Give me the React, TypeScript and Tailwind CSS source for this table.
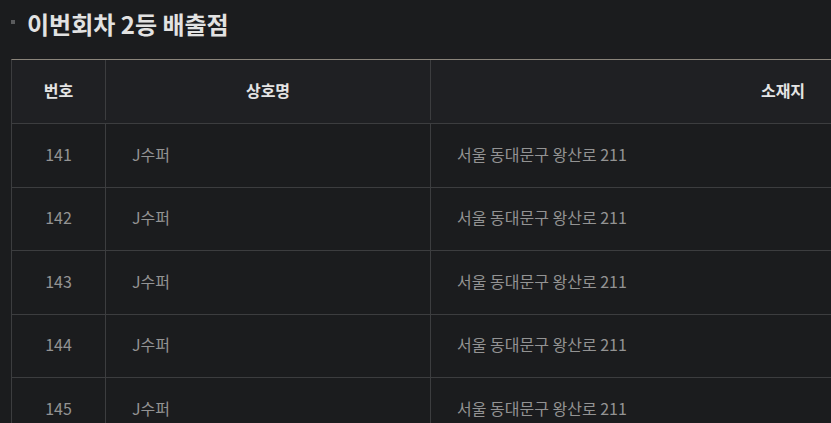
const rows = [141, 142, 143, 144, 145];

export default function App() {
  return (
    <div
      className="w-[831px] h-[423px] overflow-hidden bg-[#1b1c1e]"
      style={{ fontFamily: '"Noto Sans CJK KR", "Noto Sans", sans-serif' }}
    >
      <div className="flex items-start gap-3 pl-[11px] pt-[7px] h-[59px]">
        <span className="mt-[13px] w-1 h-1 bg-[#5a5b5d]" />
        <h2 className="text-[24px] leading-[34px] font-bold text-[#e2e2e2]">이번회차 2등 배출점</h2>
      </div>
      <div className="ml-[11px] w-[1124px] border-t border-[#8a847a] border-l border-l-[#3c3d3f]">
        <div className="flex h-[64px] bg-[#1f2023] border-b border-[#3c3d3f] text-[16px] font-bold text-[#e4e4e4] pb-[3px]">
          <div className="w-[94px] flex items-center justify-center border-r border-[#3c3d3f]">번호</div>
          <div className="w-[325px] flex items-center justify-center border-r border-[#3c3d3f]">상호명</div>
          <div className="flex-1 flex items-center justify-center">소재지</div>
        </div>
        {rows.map((n) => (
          <div key={n} className="flex h-[63.5px] border-b border-[#3c3d3f] text-[16px] text-[#939393]">
            <div className="w-[94px] flex items-center justify-center border-r border-[#3c3d3f] pb-[3px]">{n}</div>
            <div className="w-[325px] flex items-center pl-[26px] border-r border-[#3c3d3f] pb-[3px]">J수퍼</div>
            <div className="flex-1 flex items-center pl-[26px] pb-[3px]">서울 동대문구 왕산로 211</div>
          </div>
        ))}
      </div>
    </div>
  );
}
